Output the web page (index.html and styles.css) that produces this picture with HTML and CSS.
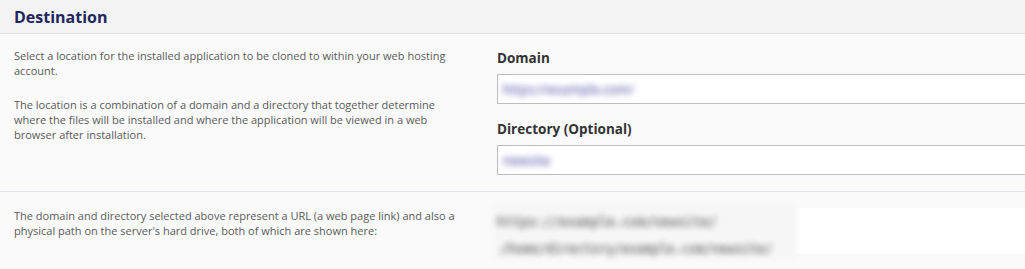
FILE: index.html
```html
<!DOCTYPE html>
<html lang="en">
<head>
  <meta charset="UTF-8"/>
  <title>Destination</title>
  <link rel="stylesheet" href="styles.css">
</head>
<body>
  <div class="panel">
    <div class="panel-head">
      <h2>Destination</h2>
    </div>
    <div class="section">
      <div class="help">
        <p>Select a location for the installed application to be cloned to within your web hosting account.</p>
        <p>The location is a combination of a domain and a directory that together determine where the files will be installed and where the application will be viewed in a web browser after installation.</p>
      </div>
      <div class="fields">
        <label class="field-label">Domain</label>
        <div class="input"><span class="blur">https://example.com/</span></div>
        <label class="field-label">Directory (Optional)</label>
        <div class="input"><span class="blur">newsite</span></div>
      </div>
    </div>
    <div class="section">
      <div class="help">
        <p>The domain and directory selected above represent a URL (a web page link) and also a physical path on the server's hard drive, both of which are shown here:</p>
      </div>
      <div class="paths">
        <div class="paths-blur">
          <div class="path-line">https://example.com/newsite/</div>
          <div class="path-line indent">/home/directory/example.com/newsite/</div>
        </div>
      </div>
    </div>
  </div>
</body>
</html>
```

FILE: styles.css
```css
:root {
  --head-bg: #f3f3f3;
  --body-bg: #fafafa;
  --title-color: #1f2660;
  --text-color: #5a5a5a;
  --label-color: #333333;
  --input-border: #bdbdbd;
}

*, *::before, *::after { box-sizing: border-box; }

body {
  margin: 0;
  font-family: 'Open Sans', sans-serif;
  background: var(--body-bg);
  overflow: hidden;
}

.panel-head {
  background: var(--head-bg);
  border-bottom: 1px solid #e2e2e2;
  height: 34px;
  padding: 0 14px;
  display: flex;
  align-items: center;
}

.panel-head h2 {
  margin: 0;
  font-size: 16px;
  font-weight: 700;
  color: var(--title-color);
}

.section {
  display: grid;
  grid-template-columns: 450px 560px;
  column-gap: 33px;
  padding: 14px 0 15px 14px;
  border-bottom: 1px solid #e2e2ea;
}

.section:last-child {
  border-bottom: none;
  padding-top: 16px;
}

.help p {
  margin: 0;
  font-size: 11px;
  line-height: 15px;
  color: var(--text-color);
}

.help p + p { margin-top: 19px; }

.fields {
  display: flex;
  flex-direction: column;
}

.field-label {
  font-size: 13.5px;
  font-weight: 700;
  line-height: 20px;
  color: var(--label-color);
  margin-bottom: 6px;
}

.input {
  height: 30px;
  background: #fff;
  border: 1px solid var(--input-border);
  padding: 0 5px;
  display: flex;
  align-items: center;
  margin-bottom: 15px;
}

.input:last-child { margin-bottom: 1px; }

/* blurred values: transparent glyphs carrying a soft shadow */
.blur {
  font-size: 13px;
  color: transparent;
  text-shadow: 0 0 6px #8f8cc4, 0 0 6px #8f8cc4;
}

.paths {
  background: #fff;
  height: 46px;
}

.paths-blur {
  width: 296px;
  height: 100%;
  background: #f6f6f6;
  box-shadow: 0 0 6px 4px #f6f6f6;
  font-family: 'DejaVu Sans Mono', monospace;
  font-size: 13px;
  color: transparent;
  text-shadow: 0 0 6px #8a8a8a, 0 0 6px #8a8a8a;
}

.path-line {
  line-height: 27px;
  white-space: nowrap;
}

.path-line.indent { padding-left: 4px; font-size: 12.5px; }
```
